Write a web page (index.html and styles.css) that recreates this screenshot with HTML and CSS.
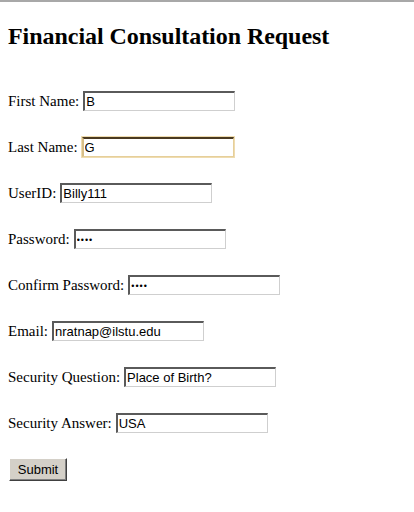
FILE: index.html
```html
<!DOCTYPE html>
<html>
<head>
<meta charset="utf-8">
<title>Financial Consultation Request</title>
<link rel="stylesheet" href="styles.css">
</head>
<body>
<div class="page">
  <h2 class="title">Financial Consultation Request</h2>
  <form class="form">
    <div class="row"><label class="label">First Name:</label><input class="field" type="text" value="B"></div>
    <div class="row"><label class="label">Last Name:</label><input class="field focused" type="text" value="G"></div>
    <div class="row"><label class="label">UserID:</label><input class="field" type="text" value="Billy111"></div>
    <div class="row"><label class="label">Password:</label><input class="field pw" type="password" value="abcd"></div>
    <div class="row"><label class="label">Confirm Password:</label><input class="field pw" type="password" value="abcd"></div>
    <div class="row"><label class="label">Email:</label><input class="field" type="text" value="nratnap@ilstu.edu"></div>
    <div class="row"><label class="label">Security Question:</label><input class="field" type="text" value="Place of Birth?"></div>
    <div class="row"><label class="label">Security Answer:</label><input class="field" type="text" value="USA"></div>
    <div class="actions"><button class="submit" type="button">Submit</button></div>
  </form>
</div>
</body>
</html>
```
FILE: styles.css
```css
html, body {
  margin: 0;
  padding: 0;
  background: #ffffff;
}
body {
  border-top: 2px solid #a8a8a8;
  font-family: "Liberation Serif", "Times New Roman", serif;
  color: #000;
}
.page {
  padding: 0 8px;
}
.title {
  margin: 20px 0 41px 0;
  font-size: 24px;
  line-height: 28px;
  font-weight: bold;
  letter-spacing: -0.05px;
}
.form {
  display: flex;
  flex-direction: column;
  gap: 26px;
}
.row {
  display: flex;
  align-items: center;
  gap: 4px;
  height: 20px;
}
.label {
  font-size: 15px;
  line-height: 18px;
}
.field {
  box-sizing: border-box;
  width: 152px;
  height: 20px;
  margin: 0;
  padding: 0 0 0 1px;
  border-style: solid;
  border-width: 2px 1px 1px 2px;
  border-color: #5a5a5a #cfcfcf #cfcfcf #5a5a5a;
  font-family: "Liberation Sans", Arial, sans-serif;
  font-size: 13px;
  color: #000;
  background: #fff;
  outline: none;
}
.focused {
  border-color: #4a3a20 #e6cf9a #e6cf9a #d8bf88;
  box-shadow: 0 0 0 1px #efdcb0;
}
.pw {
  -webkit-text-security: square;
  font-size: 9px;
  letter-spacing: 1px;
}
.actions {
  display: flex;
  margin-top: -1px;
}
.submit {
  display: block;
  box-sizing: border-box;
  margin: 0 0 0 1px;
  width: 58px;
  height: 23px;
  padding: 0 0 1px 0;
  background: #d4d0c8;
  border-style: solid;
  border-width: 1px;
  border-color: #ffffff #404040 #404040 #ffffff;
  box-shadow: inset -1px -1px 0 #808080;
  font-family: "Liberation Sans", Arial, sans-serif;
  font-size: 13px;
  color: #000;
}
```
